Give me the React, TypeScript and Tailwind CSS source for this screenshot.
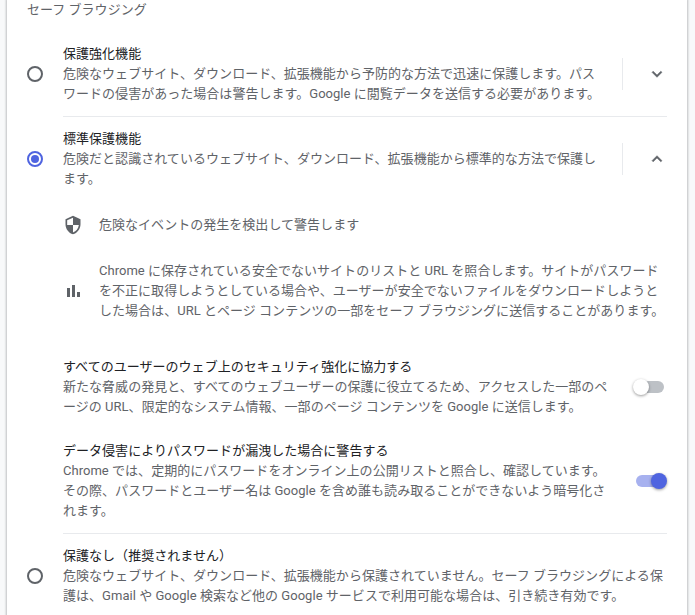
import { ReactNode } from "react";

function Lines({ lines }: { lines: string[] }) {
  return (
    <div className="text-[#5f6368]">
      {lines.map((line) => (
        <div key={line} className="h-5 whitespace-nowrap">{line}</div>
      ))}
    </div>
  );
}

function Label({ title, lines }: { title: string; lines: string[] }) {
  return (
    <div className="min-w-0 flex-1">
      <div className="h-5 whitespace-nowrap text-[#202124]">{title}</div>
      <Lines lines={lines} />
    </div>
  );
}

function Radio({ checked = false }: { checked?: boolean }) {
  return (
    <div className={`mt-[22px] mr-5 flex size-4 shrink-0 items-center justify-center rounded-full border-2 ${checked ? "border-[#4f64e0]" : "border-[#5f6368]"}`}>
      {checked && <div className="size-2 rounded-full bg-[#4f64e0]" />}
    </div>
  );
}

function Expander({ open = false }: { open?: boolean }) {
  return (
    <div className="mt-[14px] flex h-8 w-[45px] shrink-0 items-center border-l border-[#e8eaed] pl-6">
      <svg viewBox="0 0 24 24" className="size-5 shrink-0" fill="#5f6368" stroke="#5f6368" strokeWidth="0.6">
        <path d={open ? "M12 8l-6 6 1.41 1.41L12 10.83l4.59 4.58L18 14z" : "M16.59 8.59L12 13.17 7.41 8.59 6 10l6 6 6-6z"} />
      </svg>
    </div>
  );
}

function Toggle({ on = false }: { on?: boolean }) {
  return (
    <div className={`mr-[3px] flex h-3 w-7 shrink-0 items-center rounded-full ${on ? "justify-end bg-[#a7b1ef]" : "bg-[#bdc1c6]"}`}>
      <div className={`size-4 shrink-0 rounded-full shadow-[0_1px_3px_rgba(0,0,0,0.4)] ${on ? "-mr-[3px] bg-[#4f64e0]" : "-ml-[3px] bg-white"}`} />
    </div>
  );
}

function Feature({ icon, lines, className }: { icon: ReactNode; lines: string[]; className: string }) {
  return (
    <div className={`ml-9 flex items-center gap-4 ${className}`}>
      {icon}
      <Lines lines={lines} />
    </div>
  );
}

export default function App() {
  return (
    <div className="h-[615px] w-[695px] overflow-hidden bg-[#f8f9fa] pr-[8px] pl-[7px] font-[Roboto,'Noto_Sans_CJK_JP',sans-serif] text-[13px] leading-5 tracking-[0.03px]">
      <div className="h-[640px] bg-white pr-5 pl-5 shadow-[0_0_2px_1px_rgba(60,64,67,0.3)]">
        <div className="h-5 text-[#5f6368]">セーフ ブラウジング</div>

        <div className="mt-6 flex h-[72px]">
          <Radio />
          <Label
            title="保護強化機能"
            lines={[
              "危険なウェブサイト、ダウンロード、拡張機能から予防的な方法で迅速に保護します。パス",
              "ワードの侵害があった場合は警告します。Google に閲覧データを送信する必要があります。",
            ]}
          />
          <Expander />
        </div>

        <div className="ml-9 h-px bg-[#e8eaed]" />

        <div className="mt-3 flex h-[60px]">
          <Radio checked />
          <Label
            title="標準保護機能"
            lines={["危険だと認識されているウェブサイト、ダウンロード、拡張機能から標準的な方法で保護し", "ます。"]}
          />
          <Expander open />
        </div>

        <Feature
          className="mt-[26px]"
          lines={["危険なイベントの発生を検出して警告します"]}
          icon={
            <svg viewBox="0 0 24 24" className="size-5 shrink-0" fill="#5f6368">
              <path d="M12 1L3 5v6c0 5.55 3.84 10.74 9 12 5.16-1.26 9-6.45 9-12V5l-9-4zm0 10.99h7c-.53 4.12-3.28 7.79-7 8.94V12H5V6.3l7-3.11v8.8z" />
            </svg>
          }
        />
        <Feature
          className="mt-[26px]"
          lines={[
            "Chrome に保存されている安全でないサイトのリストと URL を照合します。サイトがパスワード",
            "を不正に取得しようとしている場合や、ユーザーが安全でないファイルをダウンロードしようと",
            "した場合は、URL とページ コンテンツの一部をセーフ ブラウジングに送信することがあります。",
          ]}
          icon={
            <svg viewBox="0 0 20 20" className="size-5 shrink-0" fill="#5f6368">
              <path d="M4 7h3v9H4zM9 4h3v12H9zM14 11h3v5h-3z" />
            </svg>
          }
        />

        <div className="mt-9 ml-9 flex h-[60px] items-center">
          <Label
            title="すべてのユーザーのウェブ上のセキュリティ強化に協力する"
            lines={[
              "新たな脅威の発見と、すべてのウェブユーザーの保護に役立てるため、アクセスした一部のペ",
              "ージの URL、限定的なシステム情報、一部のページ コンテンツを Google に送信します。",
            ]}
          />
          <Toggle />
        </div>

        <div className="mt-6 ml-9 flex h-20 items-center">
          <Label
            title="データ侵害によりパスワードが漏洩した場合に警告する"
            lines={[
              "Chrome では、定期的にパスワードをオンライン上の公開リストと照合し、確認しています。",
              "その際、パスワードとユーザー名は Google を含め誰も読み取ることができないよう暗号化さ",
              "れます。",
            ]}
          />
          <Toggle on />
        </div>

        <div className="mt-3 ml-9 h-px bg-[#e8eaed]" />

        <div className="mt-3 flex h-[60px]">
          <Radio />
          <Label
            title="保護なし（推奨されません）"
            lines={[
              "危険なウェブサイト、ダウンロード、拡張機能から保護されていません。セーフ ブラウジングによる保",
              "護は、Gmail や Google 検索など他の Google サービスで利用可能な場合は、引き続き有効です。",
            ]}
          />
        </div>
      </div>
    </div>
  );
}
